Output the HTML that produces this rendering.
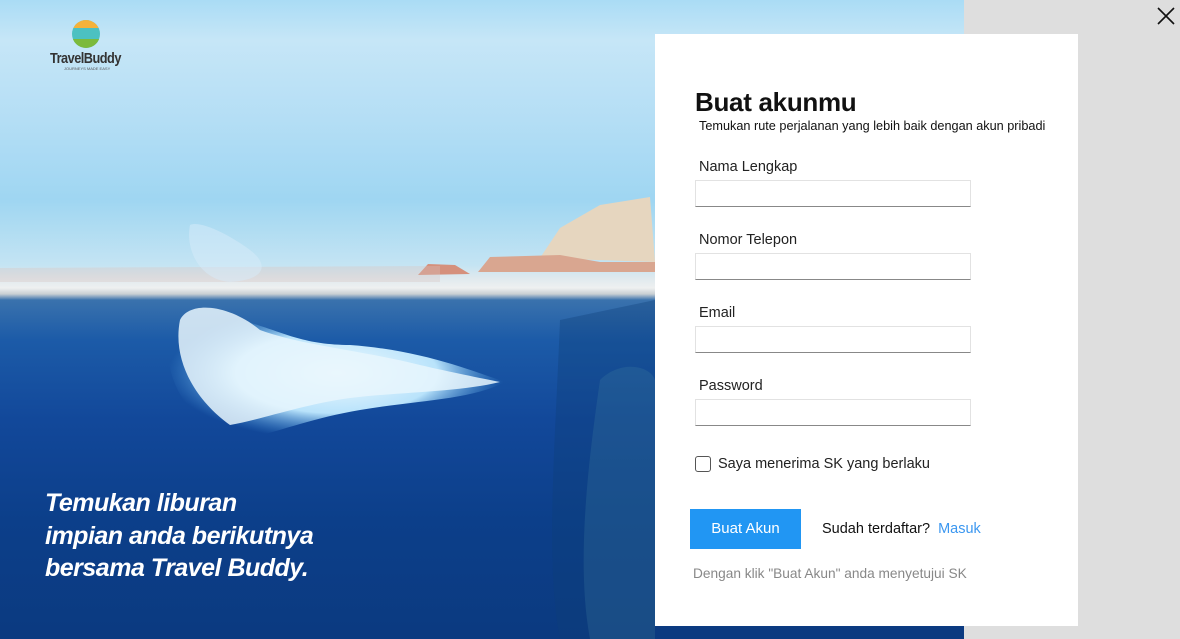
<!DOCTYPE html>
<html><head><meta charset="utf-8"><style>
*{margin:0;padding:0;box-sizing:border-box}
body{width:1180px;height:639px;overflow:hidden;position:relative;background:#dcdcdc;font-family:"Liberation Sans",sans-serif}
#bg{position:absolute;left:0;top:0;width:964px;height:639px;overflow:hidden;
background:linear-gradient(180deg,#aadcf5 0px,#c6e6f7 40px,#b4def5 120px,#9fd6f2 200px,#c4e4f3 265px,#dfe9ee 278px,#eef0f0 288px,#c9cfd3 294px,#3a72ad 300px,#1c5ba8 340px,#12489a 420px,#0c3f8a 520px,#0b3a80 639px)}
#grey{position:absolute;left:964px;top:0;width:216px;height:639px;background:#dedede}
#panel{position:absolute;left:655px;top:34px;width:423px;height:592px;background:#fff}
.close{position:absolute;left:1156px;top:6px}
h1{position:absolute;left:695px;top:87px;font-size:26px;font-weight:bold;color:#111;letter-spacing:-0.3px}
.sub{position:absolute;left:699px;top:119px;font-size:12.7px;color:#111}
.lbl{position:absolute;left:699px;font-size:14.5px;color:#222}
.inp{position:absolute;left:695px;width:276px;height:27px;border:1px solid #e2e2e2;border-bottom:1px solid #888;background:#fff}
.cb{position:absolute;left:695px;top:456px;width:16px;height:16px;border:1.5px solid #555;border-radius:3px;background:#fff}
.btn{position:absolute;left:690px;top:509px;width:111px;height:40px;background:#2196f3;color:#fff;font-size:15px;text-align:center;line-height:40px}
.hero{position:absolute;left:45px;top:487px;color:#fff;font-style:italic;font-weight:bold;font-size:25px;line-height:32.5px;letter-spacing:-0.5px}
</style></head><body>
<div id="bg">
<svg width="964" height="639" style="position:absolute;left:0;top:0">
<defs><radialGradient id="sp" cx="50%" cy="50%" r="50%"><stop offset="0" stop-color="#f2fbff"/><stop offset="0.6" stop-color="#b9e3fb"/><stop offset="1" stop-color="#4fa0e0" stop-opacity="0"/></radialGradient></defs>
<path d="M540 258 L560 228 L600 205 L650 197 L655 262 Z" fill="#e6d6bf"/>
<path d="M478 272 L490 257 L560 255 L600 262 L655 262 L655 272 Z" fill="#d9a690"/>
<path d="M418 275 L428 264 L455 265 L470 274 Z" fill="#d5907c"/>
<path d="M0 268 L440 266 L440 282 L0 282 Z" fill="#d8c4c0" opacity="0.35"/>
<path d="M170 330 C165 300 210 300 240 320 C280 330 300 345 350 345 C420 350 470 370 505 382 C470 400 420 400 360 410 C300 420 260 440 230 440 C190 420 160 380 170 330 Z" fill="url(#sp)"/>
<path d="M180 320 C190 300 230 305 260 330 C300 345 360 350 420 365 C450 372 480 378 500 382 C460 392 400 392 350 398 C300 405 260 420 230 425 C195 400 172 360 180 320 Z" fill="#e8f6fd" opacity="0.85"/>
<path d="M190 225 C200 220 230 235 250 250 C270 265 265 280 230 282 C200 280 185 250 190 225 Z" fill="#d8ecfa" opacity="0.5"/>
<path d="M560 320 L655 300 L655 639 L560 639 C545 560 555 450 560 320 Z" fill="#0f3f78" opacity="0.35"/>
<path d="M600 380 C620 360 650 365 655 380 L655 639 L590 639 C575 560 590 450 600 380 Z" fill="#3e7ea0" opacity="0.25"/>
</svg>
<div style="position:absolute;left:72px;top:20px;width:28px;height:28px;border-radius:50%;overflow:hidden;background:#4cc1c1">
<div style="height:8px;background:#f5b23a"></div><div style="position:absolute;bottom:0;width:28px;height:9px;background:#7cba3c"></div></div>
<div style="position:absolute;left:50px;top:50px;font-size:15px;font-weight:bold;color:#333;letter-spacing:-0.6px;transform:scaleX(0.85);transform-origin:left">TravelBuddy</div>
<div style="position:absolute;left:64px;top:66px;font-size:4px;color:#555">JOURNEYS MADE EASY</div>
<div class="hero">Temukan liburan<br>impian anda berikutnya<br>bersama Travel Buddy.</div>
</div>
<div id="grey"></div>
<svg class="close" width="20" height="20"><path d="M2 2 L18 18 M18 2 L2 18" stroke="#111" stroke-width="1.6"/></svg>
<div id="panel"></div>
<h1>Buat akunmu</h1>
<div class="sub">Temukan rute perjalanan yang lebih baik dengan akun pribadi</div>
<div class="lbl" style="top:159px">Nama Lengkap</div><div class="inp" style="top:180px"></div>
<div class="lbl" style="top:232px">Nomor Telepon</div><div class="inp" style="top:253px"></div>
<div class="lbl" style="top:305px">Email</div><div class="inp" style="top:326px"></div>
<div class="lbl" style="top:378px">Password</div><div class="inp" style="top:399px"></div>
<div class="cb"></div>
<div class="lbl" style="left:718px;top:456px">Saya menerima SK yang berlaku</div>
<div class="btn">Buat Akun</div>
<div class="lbl" style="left:822px;top:521px;color:#111">Sudah terdaftar?&nbsp; <span style="color:#3b97f0">Masuk</span></div>
<div class="lbl" style="left:693px;top:566px;font-size:13.7px;color:#888">Dengan klik "Buat Akun" anda menyetujui SK</div>
</body></html>
